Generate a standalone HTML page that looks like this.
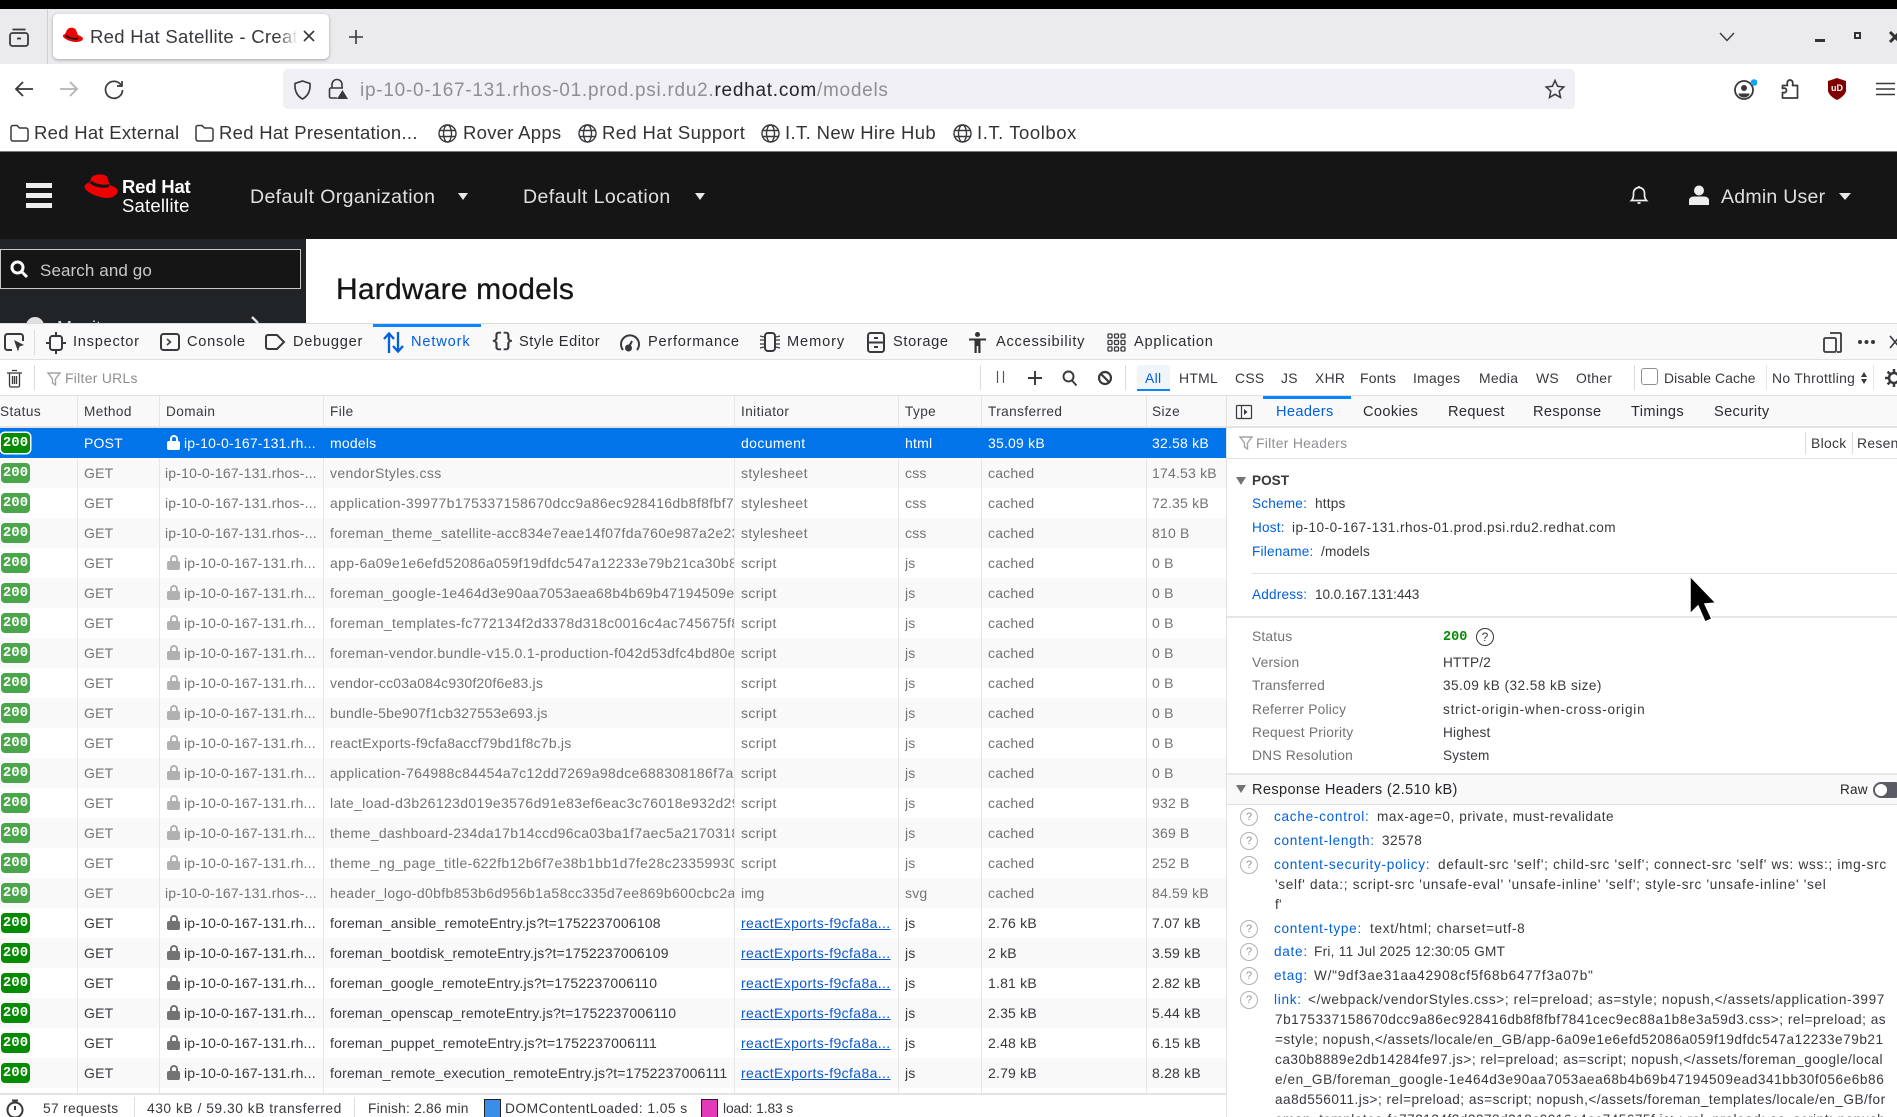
<!DOCTYPE html>
<html><head><meta charset="utf-8"><title>Red Hat Satellite</title>
<style>
html,body{margin:0;padding:0;background:#fff}
#p{position:relative;width:1897px;height:1117px;overflow:hidden;font-family:"Liberation Sans",sans-serif;background:#fff;color:#38383d}
.a{position:absolute}
.t{position:absolute;white-space:nowrap;line-height:20px;height:20px}
svg{position:absolute;overflow:visible;fill:none}
.b{font-size:18.5px;color:#333;letter-spacing:.28px}
.dt{font-size:14.6px;color:#2b2b30;letter-spacing:.75px;top:332px}
.f{font-size:13.9px;color:#38383d;top:368px;letter-spacing:.3px}
.h{font-size:13.6px;color:#38383d;top:402px;letter-spacing:.42px}
.r{position:absolute;left:0;width:1226px;height:30px;line-height:30px;font-size:14px;letter-spacing:.2px;color:#737373;overflow:hidden;background:#fff}
.r.o{background:#f9f9fa}
.r.d{color:#38383d}
.r.s{background:#0074e8;color:#fff}
.r span{position:absolute;white-space:nowrap;top:0;height:30px;overflow:hidden}
.c0{left:1px;top:5px!important;width:29px;height:20px!important;line-height:20px;background:#4aa64a;border-radius:4px;color:#fff;font:bold 14px/20px "Liberation Mono",monospace;text-align:center;letter-spacing:0}
.d .c0{background:#058b00}
.s .c0{background:#058b00;box-shadow:0 0 0 1.5px #fff}
.c1{left:84px}.c2{left:165px;width:156px}.c2.l{left:184px;width:136px}
.c3{left:330px;width:404px}.c4{left:741px;width:155px;letter-spacing:.38px}.c5{left:905px}.c6{left:988px}.c7{left:1152px}
.x{letter-spacing:.36px}
.lk{color:#0b57d0;text-decoration:underline}
.lock{position:absolute;left:167px;top:13px;width:13px;height:9px;background:#b1b1b3;border-radius:2px}
.lock:before{content:"";position:absolute;left:2.5px;top:-6px;width:4px;height:6px;border:2px solid #b1b1b3;border-bottom:0;border-radius:4px 4px 0 0;box-sizing:content-box}
.d .lock{background:#737373}.d .lock:before{border-color:#737373}
.s .lock{background:#fff}.s .lock:before{border-color:#fff}
.v{position:absolute;width:1px;top:396px;height:697px;background:#e6e6e8}
.pt{font-size:14.6px;color:#2b2b30;top:402px;letter-spacing:.35px}
.k{font-size:13.6px;color:#0060df;letter-spacing:.2px}
.kk{letter-spacing:.72px}
.w{font-size:13.6px;color:#38383d;letter-spacing:.2px}
.g{font-size:13.8px;color:#737373;letter-spacing:.2px;left:1252px}
.q{position:absolute;left:1240px;width:16px;height:16px;border:1px solid #b1b1b3;border-radius:50%;font-size:11px;line-height:16px;text-align:center;color:#8f8f93}
.fo{font-size:13.8px;color:#38383d;top:1099px;letter-spacing:.3px}
</style></head><body><div id="p">

<div class="a" style="left:0;top:0;width:1897px;height:9px;background:#000"></div>
<div class="a" style="left:0;top:9px;width:1897px;height:55px;background:#ebebed"></div>
<div class="a" style="left:47px;top:9px;width:1px;height:55px;background:#cfcfd2"></div>
<svg style="left:9px;top:27px" width="20" height="20" stroke="#38383d" stroke-width="1.8"><rect x="1" y="6" width="18" height="13" rx="2.5"/><path d="M3.5 2.5h13"/><path d="M8 11.5h4" /></svg>
<div class="a" style="left:53px;top:14px;width:276px;height:45px;background:#fff;border-radius:5px;box-shadow:0 1px 3px rgba(0,0,0,.3)"></div>
<svg style="left:62px;top:27px" width="22" height="17"><path d="M8 1c3-1 5 .5 6 2l2 5c2 .5 5 2.500 5 3.500 0 2-3 3.500-7 3.500-5 0-12-3-13-5.500-.5-1 .5-2 2-2.500l2-4c.5-1 2-2 3-2z" fill="#ee0000"/><path d="M3.500 8.500c3 2.500 8 4 12.500 3" stroke="#151515" stroke-width="1.800"/></svg>
<div class="t" style="left:90px;top:27px;width:207px;overflow:hidden;font-size:18.5px;color:#38383d;letter-spacing:.3px">Red Hat Satellite - Creat<span style="color:#c8c8cc">e</span></div>
<div class="a" style="left:278px;top:27px;width:20px;height:20px;background:linear-gradient(90deg,rgba(255,255,255,0),#fff)"></div>
<svg style="left:304px;top:31px" width="10" height="10" stroke="#38383d" stroke-width="1.600"><path d="M0 0L10 10M10 0L0 10"/></svg>
<svg style="left:349px;top:30px" width="14" height="14" stroke="#38383d" stroke-width="1.600"><path d="M7 0V14M0 7H14"/></svg>
<svg style="left:1717px;top:32px" width="20" height="10" stroke="#38383d" stroke-width="1.400"><path d="M3 1L10 8.500L17 1"/></svg>
<div class="a" style="left:1815px;top:39px;width:10px;height:3px;background:#333"></div>
<div class="a" style="left:1854px;top:32px;width:3px;height:3px;border:2.500px solid #333"></div>
<svg style="left:1890px;top:32px" width="10" height="10" stroke="#333" stroke-width="3"><path d="M0 0L10 10M10 0L0 10"/></svg>

<svg style="left:14px;top:79px" width="20" height="20" stroke="#38383d" stroke-width="1.800"><path d="M19 10H2M9 3L2 10L9 17"/></svg>
<svg style="left:59px;top:79px" width="20" height="20" stroke="#b3b3b6" stroke-width="1.800"><path d="M1 10H18M11 3L18 10L11 17"/></svg>
<svg style="left:104px;top:79px" width="20" height="20" stroke="#38383d" stroke-width="1.700"><path d="M17 6A8.500 8.500 0 1 0 18.500 11"/><path d="M18 2V7H13"/></svg>
<div class="a" style="left:283px;top:69px;width:1292px;height:40px;background:#f0f0f4;border-radius:5px"></div>
<svg style="left:293px;top:80px" width="19" height="20" stroke="#38383d" stroke-width="1.600"><path d="M9.500 1L17 3.500C17.500 11 15 16 9.500 19C4 16 1.500 11 2 3.500Z"/></svg>
<svg style="left:328px;top:79px" width="20" height="20" stroke="#38383d" stroke-width="1.600"><path d="M4 9V5.500a5 5 0 0 1 10 0V9"/><path d="M9 19H3a1.500 1.500 0 0 1-1.500-1.500V10.500A1.500 1.500 0 0 1 3 9h12"/><path d="M14.500 11L20 20H9Z" fill="#38383d" stroke="none"/></svg>
<div class="t" style="left:360px;top:81px;font-size:19px;letter-spacing:.74px;color:#8f8f93">ip-10-0-167-131.rhos-01.prod.psi.rdu2.<span style="color:#26262a">redhat.com</span>/models</div>
<svg style="left:1545px;top:79px" width="20" height="20" stroke="#38383d" stroke-width="1.500"><path d="M10 1.500L12.600 7.300L18.800 8L14.200 12.200L15.500 18.500L10 15.300L4.500 18.500L5.800 12.200L1.200 8L7.400 7.300Z"/></svg>
<svg style="left:1734px;top:79px" width="24" height="22" stroke="#38383d" stroke-width="1.800"><circle cx="10" cy="11" r="9"/><circle cx="10" cy="9" r="3" fill="#38383d" stroke="none"/><path d="M4.500 14.500h11v1a6.500 6.500 0 0 1-11 0z" fill="#38383d" stroke="none"/><circle cx="20" cy="3.500" r="3.300" fill="#0ea5f5" stroke="none"/></svg>
<svg style="left:1781px;top:79px" width="20" height="20" stroke="#38383d" stroke-width="1.700"><path d="M1.500 19V13.500C3.500 14 5.500 13.500 5.500 11.500S3.500 8.500 1.500 9.500V6.500H6.500C5.500 3 7 1 9 1s3.500 2 2.500 5.500H16.500V19Z" stroke-linejoin="round"/></svg>
<svg style="left:1827px;top:78px" width="20" height="22"><path d="M10 0L19 3V13C18 17 14 20 10 22C6 20 2 17 1 13V3Z" fill="#800000"/></svg>
<div class="t" style="left:1827px;top:78px;width:20px;text-align:center;color:#fff;font:bold 9px/20px 'Liberation Sans',sans-serif">uD</div>
<svg style="left:1875px;top:82px" width="20" height="14" stroke="#38383d" stroke-width="1.600"><path d="M1 1.500H20M1 7H20M1 12.500H20"/></svg>

<svg style="left:10px;top:124px" width="19" height="18" stroke="#38383d" stroke-width="1.500"><path d="M1 3.500A2 2 0 0 1 3 1.500H7L9.500 4H16A2 2 0 0 1 18 6V15A2 2 0 0 1 16 17H3A2 2 0 0 1 1 15Z"/></svg>
<div class="t b" style="left:34px;top:123px">Red Hat External</div>
<svg style="left:195px;top:124px" width="19" height="18" stroke="#38383d" stroke-width="1.500"><path d="M1 3.500A2 2 0 0 1 3 1.500H7L9.500 4H16A2 2 0 0 1 18 6V15A2 2 0 0 1 16 17H3A2 2 0 0 1 1 15Z"/></svg>
<div class="t b" style="left:219px;top:123px">Red Hat Presentation...</div>
<svg style="left:438px;top:124px" width="19" height="19" stroke="#38383d" stroke-width="1.400"><circle cx="9.500" cy="9.500" r="8.500"/><ellipse cx="9.500" cy="9.500" rx="4" ry="8.500"/><path d="M1.500 6.500H17.500M1.500 12.500H17.500"/></svg>
<div class="t b" style="left:463px;top:123px">Rover Apps</div>
<svg style="left:578px;top:124px" width="19" height="19" stroke="#38383d" stroke-width="1.400"><circle cx="9.500" cy="9.500" r="8.500"/><ellipse cx="9.500" cy="9.500" rx="4" ry="8.500"/><path d="M1.500 6.500H17.500M1.500 12.500H17.500"/></svg>
<div class="t b" style="left:602px;top:123px;letter-spacing:.36px">Red Hat Support</div>
<svg style="left:761px;top:124px" width="19" height="19" stroke="#38383d" stroke-width="1.400"><circle cx="9.500" cy="9.500" r="8.500"/><ellipse cx="9.500" cy="9.500" rx="4" ry="8.500"/><path d="M1.500 6.500H17.500M1.500 12.500H17.500"/></svg>
<div class="t b" style="left:785px;top:123px;letter-spacing:.36px">I.T. New Hire Hub</div>
<svg style="left:953px;top:124px" width="19" height="19" stroke="#38383d" stroke-width="1.400"><circle cx="9.500" cy="9.500" r="8.500"/><ellipse cx="9.500" cy="9.500" rx="4" ry="8.500"/><path d="M1.500 6.500H17.500M1.500 12.500H17.500"/></svg>
<div class="t b" style="left:977px;top:123px;letter-spacing:.55px">I.T. Toolbox</div>
<div class="a" style="left:0;top:151px;width:1897px;height:1px;background:#7a7a7a"></div>

<div class="a" style="left:0;top:152px;width:1897px;height:87px;background:#151515"></div>
<div class="a" style="left:26px;top:183px;width:26px;height:5px;background:#eee"></div>
<div class="a" style="left:26px;top:193px;width:26px;height:5px;background:#eee"></div>
<div class="a" style="left:26px;top:203px;width:26px;height:5px;background:#eee"></div>
<svg style="left:84px;top:174px" width="34" height="26"><path d="M12 1c2.500-1 6-.5 8 0 3 .5 3.500 3 4 5l1.500 5c4 1 8 3 8 6 0 4-5 7-10 7C15 24 3 19 .5 13.500 0 11 4 8.500 6 8l1.500-4.500C8.300 2 10 1.500 12 1z" fill="#ee0000"/><path d="M6.500 8c4 3 12 5.500 18.500 3.500" stroke="#151515" stroke-width="3"/></svg>
<div class="t" style="left:122px;top:177px;font:bold 18.5px/20px 'Liberation Sans',sans-serif;color:#fff;letter-spacing:-.2px">Red Hat</div>
<div class="t" style="left:122px;top:196px;font-size:18.5px;color:#fff;letter-spacing:.2px">Satellite</div>
<div class="t" style="left:250px;top:187px;font-size:19.500px;color:#e0e0e0;letter-spacing:.38px">Default Organization</div>
<div class="a" style="left:458px;top:193px;border-left:5.500px solid transparent;border-right:5.500px solid transparent;border-top:7px solid #e8e8e8"></div>
<div class="t" style="left:523px;top:187px;font-size:19.500px;color:#e0e0e0;letter-spacing:.42px">Default Location</div>
<div class="a" style="left:695px;top:193px;border-left:5.500px solid transparent;border-right:5.500px solid transparent;border-top:7px solid #e8e8e8"></div>
<svg style="left:1630px;top:185px" width="18" height="20" stroke="#eee" stroke-width="1.700"><path d="M1.500 15.500C4 13 3.500 10 3.500 8A5.500 5.500 0 0 1 14.500 8C14.500 10 14 13 16.500 15.500Z"/><path d="M9 1V2.500M7.500 18H10.500"/></svg>
<svg style="left:1688px;top:185px" width="22" height="20"><circle cx="11" cy="5.500" r="5" fill="#eee"/><path d="M1 20V15.500C1 13 3 11.500 6 11.500H16C19 11.500 21 13 21 15.500V20Z" fill="#eee"/></svg>
<div class="t" style="left:1721px;top:187px;font-size:19.500px;color:#e0e0e0;letter-spacing:.25px">Admin User</div>
<div class="a" style="left:1839px;top:193px;border-left:6px solid transparent;border-right:6px solid transparent;border-top:7px solid #e8e8e8"></div>

<div class="a" style="left:0;top:239px;width:306px;height:84px;background:#212427;overflow:hidden">
<div class="a" style="left:0;top:10px;width:299px;height:38px;background:#151515;border:1px solid #c8c8c8"></div>
<svg style="left:10px;top:21px" width="19" height="19" stroke="#fff" stroke-width="3"><circle cx="7.500" cy="7.500" r="5.500"/><path d="M11.500 11.500L17 17"/></svg>
<div class="t" style="left:40px;top:22px;font-size:17px;color:#c9c9c9;letter-spacing:.1px">Search and go</div>
<div class="a" style="left:26px;top:78px;width:18px;height:18px;background:#e0e0e0;border-radius:50%"></div>
<div class="t" style="left:57px;top:79px;font-size:18px;color:#e0e0e0">Monitor</div>
<svg style="left:250px;top:78px" width="12" height="12" stroke="#e0e0e0" stroke-width="2.500"><path d="M2 0L8 6"/></svg>
</div>
<div class="t" style="left:336px;top:280px;font-size:30px;color:#151515;letter-spacing:.2px;-webkit-text-stroke:.3px #151515">Hardware models</div>

<div class="a" style="left:0;top:323px;width:1897px;height:1px;background:#dcdcde"></div>
<div class="a" style="left:0;top:324px;width:1897px;height:35px;background:#f9f9fa"></div>
<div class="a" style="left:0;top:359px;width:1897px;height:1px;background:#e0e0e2"></div>
<div class="a" style="left:373px;top:324px;width:108px;height:3px;background:#0a84ff"></div>
<svg style="left:4px;top:333px" width="21" height="19" stroke="#38383d" stroke-width="2"><path d="M8 17H3.500A2.500 2.500 0 0 1 1 14.500V3.500A2.500 2.500 0 0 1 3.500 1H16.500A2.500 2.500 0 0 1 19 3.500V8"/><path d="M10 7L20 12L15.500 13.500L14 18.500Z" fill="#38383d" stroke="none"/></svg>
<div class="a" style="left:34px;top:330px;width:1px;height:25px;background:#dcdcde"></div>
<svg style="left:46px;top:332px" width="20" height="22" stroke="#38383d" stroke-width="2"><rect x="4" y="4" width="12" height="14" rx="2.500"/><path d="M10 0V4M10 18V22M0 11H4M16 11H20"/></svg>
<div class="t dt" style="left:73px">Inspector</div>
<svg style="left:160px;top:333px" width="20" height="18" stroke="#38383d" stroke-width="2"><rect x="1" y="1" width="18" height="16" rx="2.500"/><path d="M7 6L10.500 9L7 12" stroke-width="1.500"/></svg>
<div class="t dt" style="left:187px">Console</div>
<svg style="left:265px;top:334px" width="20" height="16" stroke="#38383d" stroke-width="2"><path d="M3 1H12L19 8L12 15H3A2 2 0 0 1 1 13V3A2 2 0 0 1 3 1Z"/></svg>
<div class="t dt" style="left:293px">Debugger</div>
<svg style="left:383px;top:332px" width="21" height="21" stroke="#0060df" stroke-width="2.300"><path d="M6 21V2M1 7L6 1.500L11 7M15 0V19M10 14L15 19.500L20 14"/></svg>
<div class="t dt" style="left:411px;color:#0060df;letter-spacing:.85px">Network</div>
<div class="t" style="left:491px;top:331px;font:19px/20px 'Liberation Mono',monospace;color:#38383d;letter-spacing:0;-webkit-text-stroke:.5px #38383d">{}</div>
<div class="t dt" style="left:519px;letter-spacing:.55px">Style Editor</div>
<svg style="left:620px;top:332px" width="20" height="20" stroke="#38383d" stroke-width="2"><path d="M3 18A9 9 0 1 1 17 18"/><circle cx="8.500" cy="16" r="2.500" fill="#38383d"/><path d="M9 15L12 9" /></svg>
<div class="t dt" style="left:648px">Performance</div>
<svg style="left:760px;top:332px" width="20" height="20" stroke="#38383d" stroke-width="2"><rect x="5" y="1" width="10" height="18" rx="3"/><path d="M0 4L4 5M0 8H4M0 12H4M0 16L4 15M16 5L20 4M16 8H20M16 12H20M16 15L20 16" stroke-width="1.200"/></svg>
<div class="t dt" style="left:787px;letter-spacing:.9px">Memory</div>
<svg style="left:867px;top:332px" width="18" height="21" stroke="#38383d" stroke-width="2"><rect x="1" y="1" width="16" height="19" rx="2.500"/><path d="M1 10.500H17M7 6H11M7 15H11"/></svg>
<div class="t dt" style="left:893px;letter-spacing:.65px">Storage</div>
<svg style="left:968px;top:332px" width="19" height="21"><circle cx="9.500" cy="2.500" r="2.500" fill="#333"/><path d="M1 6.500H18V8.500H12.500V21H10.300V14H8.700V21H6.500V8.500H1Z" fill="#333"/></svg>
<div class="t dt" style="left:996px">Accessibility</div>
<svg style="left:1107px;top:333px" width="19" height="19" stroke="#38383d" stroke-width="1.300"><rect x="1" y="1" width="4" height="4" rx="1"/><rect x="7.500" y="1" width="4" height="4" rx="1"/><rect x="14" y="1" width="4" height="4" rx="1"/><rect x="1" y="7.500" width="4" height="4" rx="1"/><rect x="7.500" y="7.500" width="4" height="4" rx="1"/><rect x="14" y="7.500" width="4" height="4" rx="1"/><rect x="1" y="14" width="4" height="4" rx="1"/><rect x="7.500" y="14" width="4" height="4" rx="1"/><rect x="14" y="14" width="4" height="4" rx="1"/></svg>
<div class="t dt" style="left:1134px">Application</div>
<svg style="left:1823px;top:332px" width="19" height="21" stroke="#38383d" stroke-width="1.800"><path d="M7 1H17A1 1 0 0 1 18 2V19A1 1 0 0 1 17 20H14"/><rect x="1" y="6" width="12" height="14" rx="1.500"/></svg>
<div class="a" style="left:1858px;top:340px;width:4px;height:4px;border-radius:50%;background:#38383d;box-shadow:6.500px 0 #38383d,13px 0 #38383d"></div>
<svg style="left:1890px;top:336px" width="10" height="12" stroke="#38383d" stroke-width="1.600"><path d="M0 0L10 12M10 0L0 12"/></svg>

<div class="a" style="left:0;top:395px;width:1897px;height:1px;background:#e0e0e2"></div>
<svg style="left:7px;top:369px" width="15" height="19" stroke="#38383d" stroke-width="2"><path d="M5 1.500H10M0 4H15M2.500 4.500V16.500A1.500 1.500 0 0 0 4 18H11A1.500 1.500 0 0 0 12.500 16.500V4.500M5.500 7V15M7.500 7V15M9.500 7V15" stroke-width="1.300"/></svg>
<div class="a" style="left:34px;top:365px;width:1px;height:25px;background:#dcdcde"></div>
<svg style="left:47px;top:372px" width="14" height="14" stroke="#a3a3a6" stroke-width="1.400"><path d="M1 1H13L8.500 7V13L5.500 11V7Z"/></svg>
<div class="t f" style="left:65px;color:#8f8f93">Filter URLs</div>
<div class="a" style="left:980px;top:365px;width:1px;height:25px;background:#dcdcde"></div>
<svg style="left:996px;top:371px" width="9" height="13" stroke="#555" stroke-width="1.200"><path d="M1.500 0V12M7.500 0V12"/></svg>
<svg style="left:1028px;top:371px" width="14" height="14" stroke="#38383d" stroke-width="1.900"><path d="M7 0V14M0 7H14"/></svg>
<svg style="left:1062px;top:370px" width="15" height="16" stroke="#38383d" stroke-width="1.900"><circle cx="6.500" cy="6.500" r="5"/><path d="M10 10.500L14.500 15.500"/></svg>
<svg style="left:1098px;top:371px" width="14" height="14" stroke="#38383d" stroke-width="2.200"><circle cx="7" cy="7" r="6"/><path d="M3 3L11 11"/></svg>
<div class="a" style="left:1125px;top:365px;width:1px;height:25px;background:#dcdcde"></div>
<div class="a" style="left:1137px;top:365px;width:33px;height:24px;background:#f0f5fb;border-bottom:2px solid #0a84ff;border-radius:3px 3px 0 0"></div>
<div class="t f" style="left:1145px;color:#0060df">All</div>
<div class="t f" style="left:1179px">HTML</div>
<div class="t f" style="left:1235px">CSS</div>
<div class="t f" style="left:1281px">JS</div>
<div class="t f" style="left:1315px">XHR</div>
<div class="t f" style="left:1360px">Fonts</div>
<div class="t f" style="left:1413px">Images</div>
<div class="t f" style="left:1479px">Media</div>
<div class="t f" style="left:1536px">WS</div>
<div class="t f" style="left:1576px">Other</div>
<div class="a" style="left:1634px;top:365px;width:1px;height:25px;background:#dcdcde"></div>
<div class="a" style="left:1641px;top:368px;width:15px;height:15px;border:1.500px solid #8f8f9d;border-radius:3px;background:#fff"></div>
<div class="t f" style="left:1664px;letter-spacing:.1px">Disable Cache</div>
<div class="a" style="left:1766px;top:365px;width:1px;height:25px;background:#e6e6e8"></div>
<div class="t f" style="left:1772px">No Throttling</div>
<div class="a" style="left:1861px;top:372px;border-left:3.500px solid transparent;border-right:3.500px solid transparent;border-bottom:5px solid #38383d"></div>
<div class="a" style="left:1861px;top:379px;border-left:3.500px solid transparent;border-right:3.500px solid transparent;border-top:5px solid #38383d"></div>
<div class="a" style="left:1873px;top:365px;width:1px;height:25px;background:#e6e6e8"></div>
<svg style="left:1885px;top:369px" width="18" height="18" stroke="#38383d" stroke-width="2.500"><circle cx="9" cy="9" r="5"/><path d="M9 0V4M9 14V18M0 9H4M14 9H18M2.600 2.600L5.400 5.400M12.600 12.600L15.400 15.400M15.400 2.600L12.600 5.400M5.400 12.600L2.600 15.400"/></svg>

<div class="a" style="left:0;top:396px;width:1226px;height:31px;background:#f9f9fa"></div>
<div class="a" style="left:0;top:426px;width:1897px;height:2px;background:#e4e4e6"></div>
<div class="t h" style="left:0">Status</div>
<div class="t h" style="left:84px">Method</div>
<div class="t h" style="left:166px">Domain</div>
<div class="t h" style="left:330px">File</div>
<div class="t h" style="left:741px">Initiator</div>
<div class="t h" style="left:905px">Type</div>
<div class="t h" style="left:988px">Transferred</div>
<div class="t h" style="left:1152px">Size</div>

<div class="r o" style="top:458px"><span class="c0">200</span><span class="c1">GET</span><span class="c2">ip-10-0-167-131.rhos-...</span><span class="c3 x">vendorStyles.css</span><span class="c4">stylesheet</span><span class="c5">css</span><span class="c6">cached</span><span class="c7">174.53 kB</span></div>
<div class="r" style="top:488px"><span class="c0">200</span><span class="c1">GET</span><span class="c2">ip-10-0-167-131.rhos-...</span><span class="c3 x">application-39977b175337158670dcc9a86ec928416db8f8fbf7841cec9ec88a1b8e3a59d3.css</span><span class="c4">stylesheet</span><span class="c5">css</span><span class="c6">cached</span><span class="c7">72.35 kB</span></div>
<div class="r o" style="top:518px"><span class="c0">200</span><span class="c1">GET</span><span class="c2">ip-10-0-167-131.rhos-...</span><span class="c3 x">foreman_theme_satellite-acc834e7eae14f07fda760e987a2e2349b1d</span><span class="c4">stylesheet</span><span class="c5">css</span><span class="c6">cached</span><span class="c7">810 B</span></div>
<div class="r" style="top:548px"><span class="c0">200</span><span class="c1">GET</span><i class="lock"></i><span class="c2 l">ip-10-0-167-131.rh...</span><span class="c3 x">app-6a09e1e6efd52086a059f19dfdc547a12233e79b21ca30b8889e2db14284</span><span class="c4">script</span><span class="c5">js</span><span class="c6">cached</span><span class="c7">0 B</span></div>
<div class="r o" style="top:578px"><span class="c0">200</span><span class="c1">GET</span><i class="lock"></i><span class="c2 l">ip-10-0-167-131.rh...</span><span class="c3 x">foreman_google-1e464d3e90aa7053aea68b4b69b47194509ead341bb30f</span><span class="c4">script</span><span class="c5">js</span><span class="c6">cached</span><span class="c7">0 B</span></div>
<div class="r" style="top:608px"><span class="c0">200</span><span class="c1">GET</span><i class="lock"></i><span class="c2 l">ip-10-0-167-131.rh...</span><span class="c3 x">foreman_templates-fc772134f2d3378d318c0016c4ac745675f8a1b2c3d4</span><span class="c4">script</span><span class="c5">js</span><span class="c6">cached</span><span class="c7">0 B</span></div>
<div class="r o" style="top:638px"><span class="c0">200</span><span class="c1">GET</span><i class="lock"></i><span class="c2 l">ip-10-0-167-131.rh...</span><span class="c3 x">foreman-vendor.bundle-v15.0.1-production-f042d53dfc4bd80e1a2b3</span><span class="c4">script</span><span class="c5">js</span><span class="c6">cached</span><span class="c7">0 B</span></div>
<div class="r" style="top:668px"><span class="c0">200</span><span class="c1">GET</span><i class="lock"></i><span class="c2 l">ip-10-0-167-131.rh...</span><span class="c3">vendor-cc03a084c930f20f6e83.js</span><span class="c4">script</span><span class="c5">js</span><span class="c6">cached</span><span class="c7">0 B</span></div>
<div class="r o" style="top:698px"><span class="c0">200</span><span class="c1">GET</span><i class="lock"></i><span class="c2 l">ip-10-0-167-131.rh...</span><span class="c3">bundle-5be907f1cb327553e693.js</span><span class="c4">script</span><span class="c5">js</span><span class="c6">cached</span><span class="c7">0 B</span></div>
<div class="r" style="top:728px"><span class="c0">200</span><span class="c1">GET</span><i class="lock"></i><span class="c2 l">ip-10-0-167-131.rh...</span><span class="c3">reactExports-f9cfa8accf79bd1f8c7b.js</span><span class="c4">script</span><span class="c5">js</span><span class="c6">cached</span><span class="c7">0 B</span></div>
<div class="r o" style="top:758px"><span class="c0">200</span><span class="c1">GET</span><i class="lock"></i><span class="c2 l">ip-10-0-167-131.rh...</span><span class="c3 x">application-764988c84454a7c12dd7269a98dce688308186f7a1b2c3d4e5f</span><span class="c4">script</span><span class="c5">js</span><span class="c6">cached</span><span class="c7">0 B</span></div>
<div class="r" style="top:788px"><span class="c0">200</span><span class="c1">GET</span><i class="lock"></i><span class="c2 l">ip-10-0-167-131.rh...</span><span class="c3 x">late_load-d3b26123d019e3576d91e83ef6eac3c76018e932d29a1b2c3d4</span><span class="c4">script</span><span class="c5">js</span><span class="c6">cached</span><span class="c7">932 B</span></div>
<div class="r o" style="top:818px"><span class="c0">200</span><span class="c1">GET</span><i class="lock"></i><span class="c2 l">ip-10-0-167-131.rh...</span><span class="c3 x">theme_dashboard-234da17b14ccd96ca03ba1f7aec5a21703180a1b2c3d</span><span class="c4">script</span><span class="c5">js</span><span class="c6">cached</span><span class="c7">369 B</span></div>
<div class="r" style="top:848px"><span class="c0">200</span><span class="c1">GET</span><i class="lock"></i><span class="c2 l">ip-10-0-167-131.rh...</span><span class="c3 x">theme_ng_page_title-622fb12b6f7e38b1bb1d7fe28c23359930a1b2c3d</span><span class="c4">script</span><span class="c5">js</span><span class="c6">cached</span><span class="c7">252 B</span></div>
<div class="r o" style="top:878px"><span class="c0">200</span><span class="c1">GET</span><span class="c2">ip-10-0-167-131.rhos-...</span><span class="c3 x">header_logo-d0bfb853b6d956b1a58cc335d7ee869b600cbc2a1b2c3d4e</span><span class="c4">img</span><span class="c5">svg</span><span class="c6">cached</span><span class="c7">84.59 kB</span></div>
<div class="r d" style="top:908px"><span class="c0">200</span><span class="c1">GET</span><i class="lock"></i><span class="c2 l">ip-10-0-167-131.rh...</span><span class="c3">foreman_ansible_remoteEntry.js?t=1752237006108</span><span class="c4 lk">reactExports-f9cfa8a...</span><span class="c5">js</span><span class="c6">2.76 kB</span><span class="c7">7.07 kB</span></div>
<div class="r o d" style="top:938px"><span class="c0">200</span><span class="c1">GET</span><i class="lock"></i><span class="c2 l">ip-10-0-167-131.rh...</span><span class="c3">foreman_bootdisk_remoteEntry.js?t=1752237006109</span><span class="c4 lk">reactExports-f9cfa8a...</span><span class="c5">js</span><span class="c6">2 kB</span><span class="c7">3.59 kB</span></div>
<div class="r d" style="top:968px"><span class="c0">200</span><span class="c1">GET</span><i class="lock"></i><span class="c2 l">ip-10-0-167-131.rh...</span><span class="c3">foreman_google_remoteEntry.js?t=1752237006110</span><span class="c4 lk">reactExports-f9cfa8a...</span><span class="c5">js</span><span class="c6">1.81 kB</span><span class="c7">2.82 kB</span></div>
<div class="r o d" style="top:998px"><span class="c0">200</span><span class="c1">GET</span><i class="lock"></i><span class="c2 l">ip-10-0-167-131.rh...</span><span class="c3">foreman_openscap_remoteEntry.js?t=1752237006110</span><span class="c4 lk">reactExports-f9cfa8a...</span><span class="c5">js</span><span class="c6">2.35 kB</span><span class="c7">5.44 kB</span></div>
<div class="r d" style="top:1028px"><span class="c0">200</span><span class="c1">GET</span><i class="lock"></i><span class="c2 l">ip-10-0-167-131.rh...</span><span class="c3">foreman_puppet_remoteEntry.js?t=1752237006111</span><span class="c4 lk">reactExports-f9cfa8a...</span><span class="c5">js</span><span class="c6">2.48 kB</span><span class="c7">6.15 kB</span></div>
<div class="r o d" style="top:1058px"><span class="c0">200</span><span class="c1">GET</span><i class="lock"></i><span class="c2 l">ip-10-0-167-131.rh...</span><span class="c3">foreman_remote_execution_remoteEntry.js?t=1752237006111</span><span class="c4 lk">reactExports-f9cfa8a...</span><span class="c5">js</span><span class="c6">2.79 kB</span><span class="c7">8.28 kB</span></div>

<div class="v" style="left:77px"></div><div class="v" style="left:159px"></div><div class="v" style="left:323px"></div><div class="v" style="left:734px"></div><div class="v" style="left:898px"></div><div class="v" style="left:981px"></div><div class="v" style="left:1146px"></div>

<div class="r s d" style="top:428px"><span class="c0">200</span><span class="c1">POST</span><i class="lock"></i><span class="c2 l">ip-10-0-167-131.rh...</span><span class="c3">models</span><span class="c4">document</span><span class="c5">html</span><span class="c6">35.09 kB</span><span class="c7">32.58 kB</span></div>

<div class="a" style="left:0;top:1093px;width:1226px;height:2px;background:#e4e4e6"></div>
<div class="a" style="left:0;top:1095px;width:1226px;height:22px;background:#fff"></div>
<svg style="left:6px;top:1099px" width="18" height="18" stroke="#38383d" stroke-width="2"><circle cx="9" cy="11" r="7.500"/><path d="M6 1.500H12M9 7V11"/></svg>
<div class="t fo" style="left:43px">57 requests</div>
<div class="a" style="left:134px;top:1097px;width:1px;height:20px;background:#dcdcde"></div>
<div class="t fo" style="left:147px;letter-spacing:.53px">430 kB / 59.30 kB transferred</div>
<div class="a" style="left:354px;top:1097px;width:1px;height:20px;background:#dcdcde"></div>
<div class="t fo" style="left:368px;letter-spacing:.2px">Finish: 2.86 min</div>
<div class="a" style="left:484px;top:1099px;width:15px;height:17px;background:#3b8ee8;border:1.500px solid #222"></div>
<div class="t fo" style="left:505px;letter-spacing:.45px">DOMContentLoaded: 1.05 s</div>
<div class="a" style="left:701px;top:1099px;width:15px;height:17px;background:#e33ab8;border:1.500px solid #222"></div>
<div class="t fo" style="left:723px;letter-spacing:-.1px">load: 1.83 s</div>

<div class="a" style="left:1226px;top:396px;width:1px;height:721px;background:#e0e0e2"></div>
<div class="a" style="left:1227px;top:396px;width:670px;height:30px;background:#f9f9fa"></div>
<div class="a" style="left:1263px;top:396px;width:88px;height:3px;background:#0a84ff"></div>
<svg style="left:1236px;top:405px" width="18" height="14" stroke="#38383d" stroke-width="1.200"><rect x=".5" y=".5" width="15" height="13" rx="1"/><path d="M5.500 .5V13.500"/><path d="M8 4L11.500 7L8 10Z" fill="#38383d" stroke="none"/></svg>
<div class="t pt" style="left:1276px;color:#0060df">Headers</div>
<div class="t pt" style="left:1363px">Cookies</div>
<div class="t pt" style="left:1448px">Request</div>
<div class="t pt" style="left:1533px">Response</div>
<div class="t pt" style="left:1631px">Timings</div>
<div class="t pt" style="left:1714px">Security</div>
<svg style="left:1239px;top:436px" width="14" height="14" stroke="#a3a3a6" stroke-width="1.400"><path d="M1 1H13L8.500 7V13L5.500 11V7Z"/></svg>
<div class="t f" style="left:1256px;top:433px;color:#8f8f93">Filter Headers</div>
<div class="a" style="left:1805px;top:432px;width:1px;height:22px;background:#dcdcde"></div>
<div class="t f" style="left:1811px;top:433px">Block</div>
<div class="a" style="left:1852px;top:432px;width:1px;height:22px;background:#dcdcde"></div>
<div class="t f" style="left:1857px;top:433px">Resend</div>
<div class="a" style="left:1227px;top:458px;width:670px;height:1px;background:#e0e0e2"></div>

<div class="a" style="left:1236px;top:477px;border-left:5px solid transparent;border-right:5px solid transparent;border-top:8px solid #737373"></div>
<div class="t" style="left:1252px;top:471px;font:bold 13.600px/20px 'Liberation Sans',sans-serif;color:#38383d">POST</div>
<div class="t k" style="left:1252px;top:494px">Scheme:</div><div class="t w" style="left:1315px;top:494px">https</div>
<div class="t k" style="left:1252px;top:518px">Host:</div><div class="t w" style="left:1292px;top:518px;letter-spacing:.47px">ip-10-0-167-131.rhos-01.prod.psi.rdu2.redhat.com</div>
<div class="t k" style="left:1252px;top:542px">Filename:</div><div class="t w" style="left:1321px;top:542px">/models</div>
<div class="a" style="left:1252px;top:573px;width:645px;height:1px;background:#e0e0e2"></div>
<div class="t k" style="left:1252px;top:585px">Address:</div><div class="t w" style="left:1315px;top:585px;letter-spacing:-.1px">10.0.167.131:443</div>
<div class="a" style="left:1227px;top:616px;width:670px;height:2px;background:#e6e6e8"></div>

<div class="t g" style="top:627px">Status</div>
<div class="t" style="left:1443px;top:628px;font:bold 13.500px/20px 'Liberation Mono',monospace;color:#058b00">200</div>
<div class="a" style="left:1476px;top:628px;width:16px;height:16px;border:1.500px solid #38383d;border-radius:50%;font-size:12px;line-height:16px;text-align:center;color:#38383d">?</div>
<div class="t g" style="top:653px">Version</div><div class="t w" style="left:1443px;top:653px">HTTP/2</div>
<div class="t g" style="top:676px">Transferred</div><div class="t w" style="left:1443px;top:676px;letter-spacing:.45px">35.09 kB (32.58 kB size)</div>
<div class="t g" style="top:700px">Referrer Policy</div><div class="t w" style="left:1443px;top:700px;letter-spacing:.78px">strict-origin-when-cross-origin</div>
<div class="t g" style="top:723px">Request Priority</div><div class="t w" style="left:1443px;top:723px">Highest</div>
<div class="t g" style="top:746px">DNS Resolution</div><div class="t w" style="left:1443px;top:746px">System</div>

<div class="a" style="left:1227px;top:773px;width:670px;height:32px;background:#f9f9fa;border-top:2px solid #e6e6e8;border-bottom:1px solid #e0e0e2;box-sizing:border-box"></div>
<div class="a" style="left:1236px;top:785px;border-left:5px solid transparent;border-right:5px solid transparent;border-top:8px solid #737373"></div>
<div class="t" style="left:1252px;top:780px;font-size:14.600px;color:#26262a;letter-spacing:.35px">Response Headers (2.510 kB)</div>
<div class="t w" style="left:1840px;top:780px;color:#26262a">Raw</div>
<div class="a" style="left:1873px;top:782px;width:30px;height:16px;border-radius:8px;background:#5b5b66"></div>
<div class="a" style="left:1875px;top:784px;width:12px;height:12px;border-radius:50%;background:#fff"></div>

<div class="q" style="top:808px">?</div>
<div class="t k kk" style="left:1274px;top:807px">cache-control:</div><div class="t w" style="left:1377px;top:807px;letter-spacing:.57px">max-age=0, private, must-revalidate</div>
<div class="q" style="top:832px">?</div>
<div class="t k kk" style="left:1274px;top:831px">content-length:</div><div class="t w" style="left:1382px;top:831px;letter-spacing:.5px">32578</div>
<div class="q" style="top:856px">?</div>
<div class="t k kk" style="left:1274px;top:855px">content-security-policy:</div><div class="t w" style="left:1438px;top:855px;letter-spacing:.7px">default-src 'self'; child-src 'self'; connect-src 'self' ws: wss:; img-src</div>
<div class="t w" style="left:1275px;top:875px;letter-spacing:.7px">'self' data:; script-src 'unsafe-eval' 'unsafe-inline' 'self'; style-src 'unsafe-inline' 'sel</div>
<div class="t w" style="left:1275px;top:895px">f'</div>
<div class="q" style="top:920px">?</div>
<div class="t k kk" style="left:1274px;top:919px">content-type:</div><div class="t w" style="left:1370px;top:919px;letter-spacing:.7px">text/html; charset=utf-8</div>
<div class="q" style="top:943px">?</div>
<div class="t k kk" style="left:1274px;top:942px">date:</div><div class="t w" style="left:1314px;top:942px;letter-spacing:.27px">Fri, 11 Jul 2025 12:30:05 GMT</div>
<div class="q" style="top:967px">?</div>
<div class="t k kk" style="left:1274px;top:966px">etag:</div><div class="t w" style="left:1314px;top:966px;letter-spacing:.76px">W/"9df3ae31aa42908cf5f68b6477f3a07b"</div>
<div class="q" style="top:991px">?</div>
<div class="t k kk" style="left:1274px;top:990px">link:</div><div class="t w" style="left:1308px;top:990px;letter-spacing:.63px">&lt;/webpack/vendorStyles.css&gt;; rel=preload; as=style; nopush,&lt;/assets/application-3997</div>
<div class="t w" style="left:1275px;top:1010px;letter-spacing:.53px">7b175337158670dcc9a86ec928416db8f8fbf7841cec9ec88a1b8e3a59d3.css&gt;; rel=preload; as</div>
<div class="t w" style="left:1275px;top:1030px;letter-spacing:.53px">=style; nopush,&lt;/assets/locale/en_GB/app-6a09e1e6efd52086a059f19dfdc547a12233e79b21</div>
<div class="t w" style="left:1275px;top:1050px;letter-spacing:.52px">ca30b8889e2db14284fe97.js&gt;; rel=preload; as=script; nopush,&lt;/assets/foreman_google/local</div>
<div class="t w" style="left:1275px;top:1070px;letter-spacing:.58px">e/en_GB/foreman_google-1e464d3e90aa7053aea68b4b69b47194509ead341bb30f056e6b86</div>
<div class="t w" style="left:1275px;top:1090px;letter-spacing:.49px">aa8d556011.js&gt;; rel=preload; as=script; nopush,&lt;/assets/foreman_templates/locale/en_GB/for</div>
<div class="t w" style="left:1275px;top:1110px;letter-spacing:.5px">eman_templates-fc772134f2d3378d318c0016c4ac745675f.js&gt;; rel=preload; as=script; nopush</div>

<svg style="left:1689px;top:575px" width="30" height="50"><path d="M1 1L1 39L9 31L16 47L23 44L16 29L27 28Z" fill="#000" stroke="#fff" stroke-width="1.500"/></svg>

</div></body></html>
